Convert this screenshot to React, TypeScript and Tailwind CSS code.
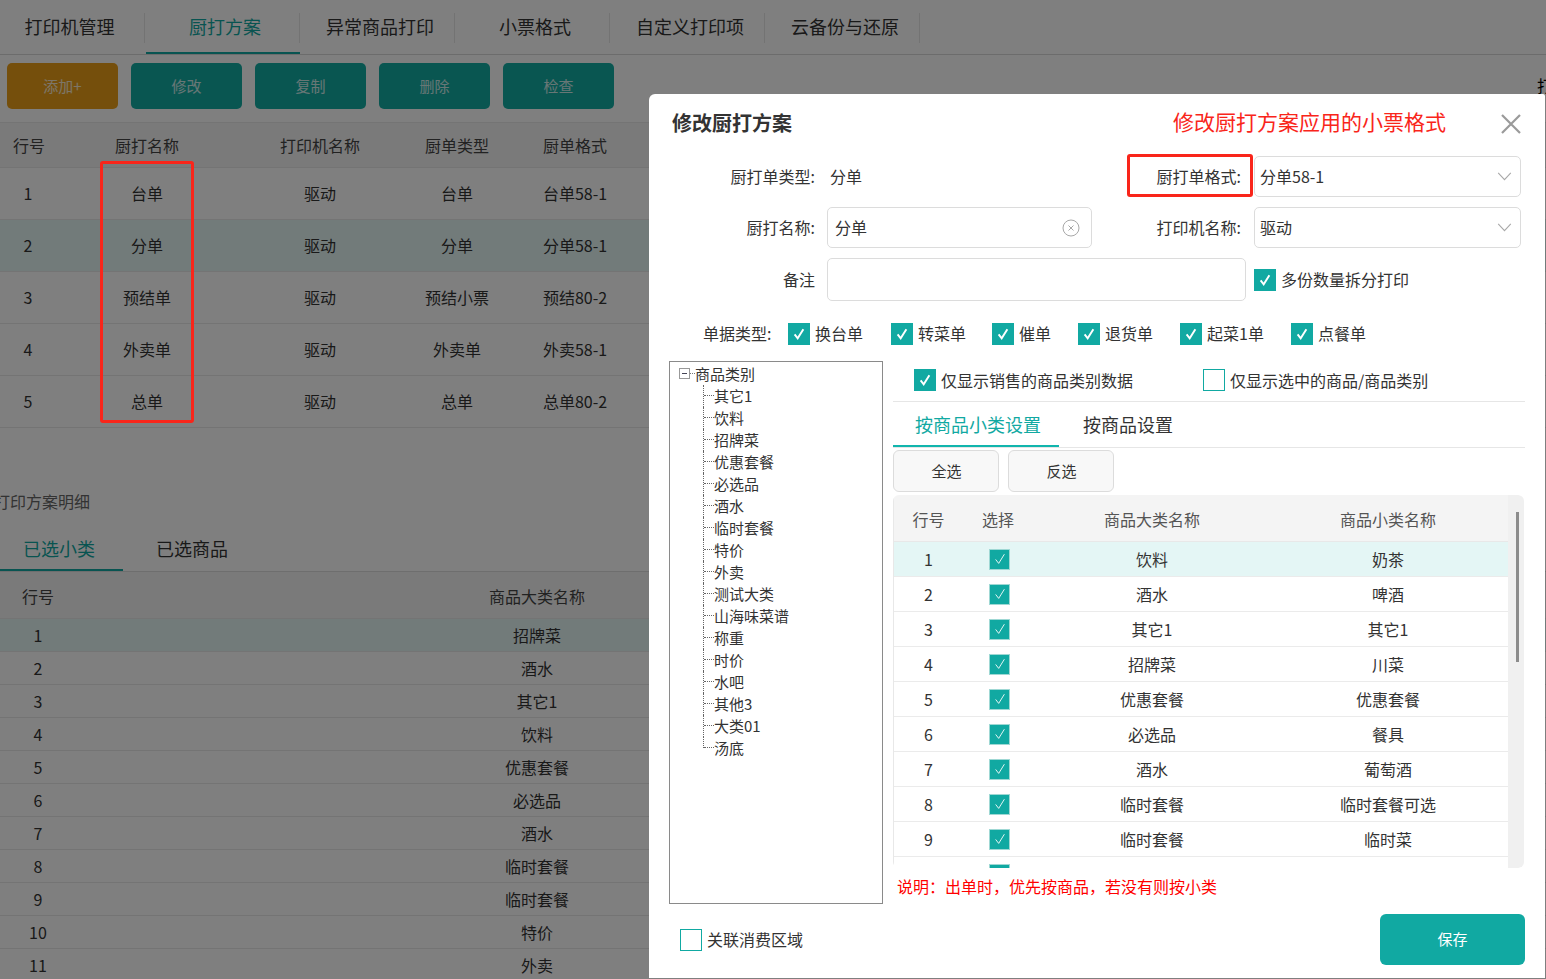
import React from 'react';

const FONT = 'font-["Noto_Sans_CJK_SC","Liberation_Sans",sans-serif]';

const mainTabs = ['打印机管理', '厨打方案', '异常商品打印', '小票格式', '自定义打印项', '云备份与还原'];
const toolButtons = ['修改', '复制', '删除', '检查'];

const plans = [
  { id: 1, name: '台单', printer: '驱动', type: '台单', format: '台单58-1' },
  { id: 2, name: '分单', printer: '驱动', type: '分单', format: '分单58-1' },
  { id: 3, name: '预结单', printer: '驱动', type: '预结小票', format: '预结80-2' },
  { id: 4, name: '外卖单', printer: '驱动', type: '外卖单', format: '外卖58-1' },
  { id: 5, name: '总单', printer: '驱动', type: '总单', format: '总单80-2' },
];

const selectedCats = ['招牌菜', '酒水', '其它1', '饮料', '优惠套餐', '必选品', '酒水', '临时套餐', '临时套餐', '特价', '外卖'];

const treeItems = ['其它1', '饮料', '招牌菜', '优惠套餐', '必选品', '酒水', '临时套餐', '特价', '外卖', '测试大类', '山海味菜谱', '称重', '时价', '水吧', '其他3', '大类01', '汤底'];

const billTypes = [
  { label: '换台单', width: 'w-[103px]' },
  { label: '转菜单', width: 'w-[101px]' },
  { label: '催单', width: 'w-[86px]' },
  { label: '退货单', width: 'w-[102px]' },
  { label: '起菜1单', width: 'w-[111px]' },
  { label: '点餐单', width: 'w-[90px]' },
];

const catRows = [
  ['饮料', '奶茶'],
  ['酒水', '啤酒'],
  ['其它1', '其它1'],
  ['招牌菜', '川菜'],
  ['优惠套餐', '优惠套餐'],
  ['必选品', '餐具'],
  ['酒水', '葡萄酒'],
  ['临时套餐', '临时套餐可选'],
  ['临时套餐', '临时菜'],
  ['', ''],
];

const CheckBox: React.FC<{ checked?: boolean; thin?: boolean }> = ({ checked = true, thin }) => {
  if (!checked) {
    return <span className="block w-[22px] h-[22px] shrink-0 border border-[#11a9a2] bg-white" />;
  }
  return (
    <span className={`flex items-center justify-center shrink-0 bg-[#11a9a2] ${thin ? 'w-[21px] h-[21px] border border-[#9fd8d4]' : 'w-[22px] h-[22px]'}`}>
      <svg viewBox="0 0 16 16" className="w-[14px] h-[14px]" fill="none" stroke="white" strokeWidth={thin ? 1 : 2.2}>
        <path d="M3 8.5 L6.5 13 L13 2.5" />
      </svg>
    </span>
  );
};

const Chevron = () => (
  <svg viewBox="0 0 16 10" className="w-[15px] h-[9px]" fill="none" stroke="#a8a8a8" strokeWidth="1.2">
    <path d="M1 1 L8 8.5 L15 1" />
  </svg>
);

const SelectBox: React.FC<{ value: string }> = ({ value }) => (
  <div className="ml-[13px] w-[267px] h-[41px] shrink-0 flex items-center justify-between pl-[5px] pr-[8px] border border-[#dcdcdc] rounded-[5px] text-[16px] text-[#333]">
    <span className="-mt-[2px]">{value}</span>
    <Chevron />
  </div>
);

export default function App() {
  return (
    <div className={`relative w-full h-[979px] overflow-hidden bg-white ${FONT}`}>
      {/* page behind the dialog */}
      <div className="flex h-[55px] border-b border-[#d8d8d8]">
        {mainTabs.map((t, i) => (
          <div key={t} className={`relative flex items-center justify-center text-[18px] ${i === 0 ? 'w-[145px] pr-[6px]' : 'w-[155px] pl-[5px]'} ${i === 1 ? 'text-[#11a9a2]' : 'text-[#333]'}`}>
            <span className="-mt-[2px]">{t}</span>
            <span className="absolute right-0 top-[13px] h-[30px] border-r border-[#e6e6e6]" />
            {i === 1 && <span className="absolute left-[1px] right-0 bottom-0 h-[2px] bg-[#11a9a2]" />}
          </div>
        ))}
      </div>
      <div className="flex h-[68px] pt-[8px] pl-[7px] gap-[13px] border-b border-[#e8e8e8]">
        <button className="w-[111px] h-[46px] rounded-[5px] bg-[#ea9f18] text-white/80 text-[15px]">添加+</button>
        {toolButtons.map((b) => (
          <button key={b} className="w-[111px] h-[46px] rounded-[5px] bg-[#12aca3] text-white/80 text-[15px]">{b}</button>
        ))}
        <span className="ml-auto -mr-[7px] mt-[10px] text-[16px] text-black">打</span>
      </div>

      <div className="grid grid-cols-[56px_182px_164px_110px_126px_1fr] h-[45px] items-center text-center text-[16px] text-[#444] bg-[#f5f5f5] border-b border-[#e8e8e8]">
        <span className="pl-[2px]">行号</span><span>厨打名称</span><span>打印机名称</span><span>厨单类型</span><span>厨单格式</span><span />
      </div>
      {plans.map((p) => (
        <div key={p.id} className={`grid grid-cols-[56px_182px_164px_110px_126px_1fr] h-[52px] pb-[2px] items-center text-center text-[16px] text-[#333] border-b border-[#e8e8e8] ${p.id === 2 ? 'bg-[#e4f6f5]' : ''}`}>
          <span>{p.id}</span><span>{p.name}</span><span>{p.printer}</span><span>{p.type}</span><span>{p.format}</span><span />
        </div>
      ))}

      <div className="h-[24px] mt-[61px] -ml-[6px] text-[16px] text-[#666]">
        打印方案明细
      </div>
      <div className="flex h-[59px] pt-[22px] border-b border-[#dcdcdc] text-[18px]">
        <div className="relative w-[123px] pl-[23px] text-[#11a9a2]">
          已选小类
          <span className="absolute left-0 right-0 bottom-0 h-[2px] bg-[#11a9a2]" />
        </div>
        <div className="ml-[34px] -translate-x-[1px] text-[#333]">已选商品</div>
      </div>
      <div className="grid grid-cols-[76px_922px_1fr] h-[47px] pt-[1px] items-center text-center text-[16px] text-[#444] bg-[#f5f5f5] border-b border-[#e8e8e8]">
        <span>行号</span><span>商品大类名称</span><span />
      </div>
      {selectedCats.map((c, i) => (
        <div key={i} className={`grid grid-cols-[76px_922px_1fr] h-[33px] items-center text-center text-[16px] text-[#333] border-b border-[#e8e8e8] ${i === 0 ? 'bg-[#e4f6f5]' : ''}`}>
          <span>{i + 1}</span><span>{c}</span><span />
        </div>
      ))}

      {/* mask */}
      <div className="absolute inset-0 bg-black/50" />
      <div className="absolute left-[100px] top-[161px] w-[94px] h-[262px] border-[3px] border-[#f9251a] rounded-[3px]" />

      {/* dialog */}
      <div className="absolute left-[649px] top-[94px] w-[896px] h-[884px] bg-white rounded-tl-[6px] rounded-tr-[2px] text-[#333]">
        <div className="relative flex items-center h-[60px] pl-[23px] pr-[23px]">
          <span className="-mt-[2px] text-[20px] font-bold text-[#333]">修改厨打方案</span>
          <span className="ml-auto -mt-[4px] mr-[54px] text-[21px] text-[#f9251a]">修改厨打方案应用的小票格式</span>
          <svg viewBox="0 0 22 22" className="w-[22px] h-[22px]" fill="none" stroke="#9a9a9a" strokeWidth="2.2">
            <path d="M2 2 L20 20 M20 2 L2 20" />
          </svg>
        </div>

        {/* form */}
        <div className="relative flex items-center h-[41px] mt-[2px] text-[16px]">
          <span className="w-[166px] shrink-0 -mt-[2px] text-right">厨打单类型:</span>
          <span className="ml-[15px] w-[240px] shrink-0 -mt-[2px]">分单</span>
          <span className="w-[171px] shrink-0 -mt-[2px] text-right">厨打单格式:</span>
          <SelectBox value="分单58-1" />
          <span className="absolute left-[478px] -top-[2px] w-[126px] h-[43px] border-[3px] border-[#f9251a] rounded-[3px]" />
        </div>
        <div className="flex items-center h-[41px] mt-[10px] text-[16px]">
          <span className="w-[166px] shrink-0 -mt-[2px] text-right">厨打名称:</span>
          <div className="ml-[12px] w-[265px] h-[41px] shrink-0 flex items-center justify-between pl-[7px] pr-[11px] border border-[#dcdcdc] rounded-[5px]">
            <span className="-mt-[2px]">分单</span>
            <svg viewBox="0 0 18 18" className="w-[18px] h-[18px]" fill="none" stroke="#a8a8a8" strokeWidth="1">
              <circle cx="9" cy="9" r="8" />
              <path d="M6.5 6.5 L11.5 11.5 M11.5 6.5 L6.5 11.5" />
            </svg>
          </div>
          <span className="w-[149px] shrink-0 -mt-[2px] text-right">打印机名称:</span>
          <SelectBox value="驱动" />
        </div>
        <div className="flex items-center h-[43px] mt-[10px] text-[16px]">
          <span className="w-[166px] shrink-0 -mt-[2px] text-right">备注</span>
          <div className="ml-[12px] w-[419px] h-[43px] shrink-0 border border-[#dcdcdc] rounded-[5px]" />
          <span className="ml-[8px]"><CheckBox /></span>
          <span className="ml-[5px] -mt-[2px]">多份数量拆分打印</span>
        </div>
        <div className="flex items-center h-[22px] mt-[22px] pl-[54px] text-[16px]">
          <span className="w-[85px] -mt-[2px]">单据类型:</span>
          {billTypes.map((b) => (
            <div key={b.label} className={`flex items-center gap-[5px] ${b.width}`}>
              <CheckBox />
              <span className="-mt-[2px]">{b.label}</span>
            </div>
          ))}
        </div>

        <div className="flex mt-[16px] pl-[20px]">
          {/* category tree */}
          <div className="w-[214px] h-[543px] border border-[#8a8a8a] pl-[9px] text-[15px] leading-[22px] text-[#333]">
            <div className="flex items-center h-[23px]">
              <span className="flex items-center justify-center w-[11px] h-[11px] border border-[#999]">
                <span className="w-[5px] h-px bg-[#445]" />
              </span>
              <span className="w-[5px] border-t border-dotted border-[#777]" />
              <span>商品类别</span>
            </div>
            <div className="ml-[24px]">
              {treeItems.map((t, i) => (
                <div key={t} className="flex h-[22px]">
                  <div className={`w-[11px] border-l border-dotted border-[#666] ${i === treeItems.length - 1 ? 'h-[11px]' : ''}`}>
                    <div className="h-[11px] border-b border-dotted border-[#666]" />
                  </div>
                  <span>{t}</span>
                </div>
              ))}
            </div>
          </div>

          {/* right column */}
          <div className="ml-[10px] w-[632px]">
            <div className="flex items-center h-[41px] border-b border-[#e6e6e6] pb-[2px] text-[16px]">
              <span className="ml-[21px]"><CheckBox /></span>
              <span className="ml-[5px] w-[262px]">仅显示销售的商品类别数据</span>
              <CheckBox checked={false} />
              <span className="ml-[5px]">仅显示选中的商品/商品类别</span>
            </div>
            <div className="flex h-[46px] border-b border-[#e6e6e6] text-[18px]">
              <div className="relative w-[166px] pl-[22px] pt-[9px] text-[#11a9a2]">
                按商品小类设置
                <span className="absolute left-0 right-0 bottom-0 h-[2px] bg-[#11b5ad]" />
              </div>
              <div className="ml-[24px] pt-[9px]">按商品设置</div>
            </div>
            <div className="flex gap-[9px] mt-[2px]">
              <button className="w-[106px] h-[42px] pl-[1px] bg-[#f8f8f8] border border-[#dcdcdc] rounded-[6px] text-[15px]">全选</button>
              <button className="w-[106px] h-[42px] pl-[1px] bg-[#f8f8f8] border border-[#dcdcdc] rounded-[6px] text-[15px]">反选</button>
            </div>

            <div className="flex h-[373px] mt-[3px] rounded-[6px] overflow-hidden">
              <div className="w-[615px] overflow-hidden border-l border-[#e8e8e8]">
                <div className="grid grid-cols-[69px_70px_238px_234px] h-[47px] pt-[1px] items-center text-center text-[16px] text-[#555] bg-[#f4f4f4] border-b border-[#e8e8e8]">
                  <span>行号</span><span>选择</span><span>商品大类名称</span><span>商品小类名称</span>
                </div>
                {catRows.map((r, i) => (
                  <div key={i} className={`grid grid-cols-[69px_70px_238px_234px] h-[35px] items-center text-center text-[16px] border-b border-[#ebebeb] ${i === 0 ? 'bg-[#e4f6f5]' : ''}`}>
                    <span>{i < 9 ? i + 1 : ''}</span>
                    <span className="flex justify-center pl-[3px]"><CheckBox thin /></span>
                    <span>{r[0]}</span>
                    <span>{r[1]}</span>
                  </div>
                ))}
              </div>
              <div className="w-[16px] bg-[#f0f0f0] rounded-r-[6px] pt-[17px] pl-[8px]">
                <div className="w-[3px] h-[150px] bg-[#8c8c8c]" />
              </div>
            </div>
            <div className="mt-[6px] ml-[4px] text-[16px] text-[#ff0000]">说明：出单时，优先按商品，若没有则按小类</div>
          </div>
        </div>

        <div className="flex items-start mt-[10px] pl-[31px]">
          <div className="flex items-center gap-[5px] mt-[15px] text-[16px]">
            <CheckBox checked={false} />
            <span className="-mt-[2px]">关联消费区域</span>
          </div>
          <button className="ml-auto mr-[20px] w-[145px] h-[51px] rounded-[6px] bg-[#11a9a2] text-white text-[15px]">保存</button>
        </div>
      </div>
    </div>
  );
}
